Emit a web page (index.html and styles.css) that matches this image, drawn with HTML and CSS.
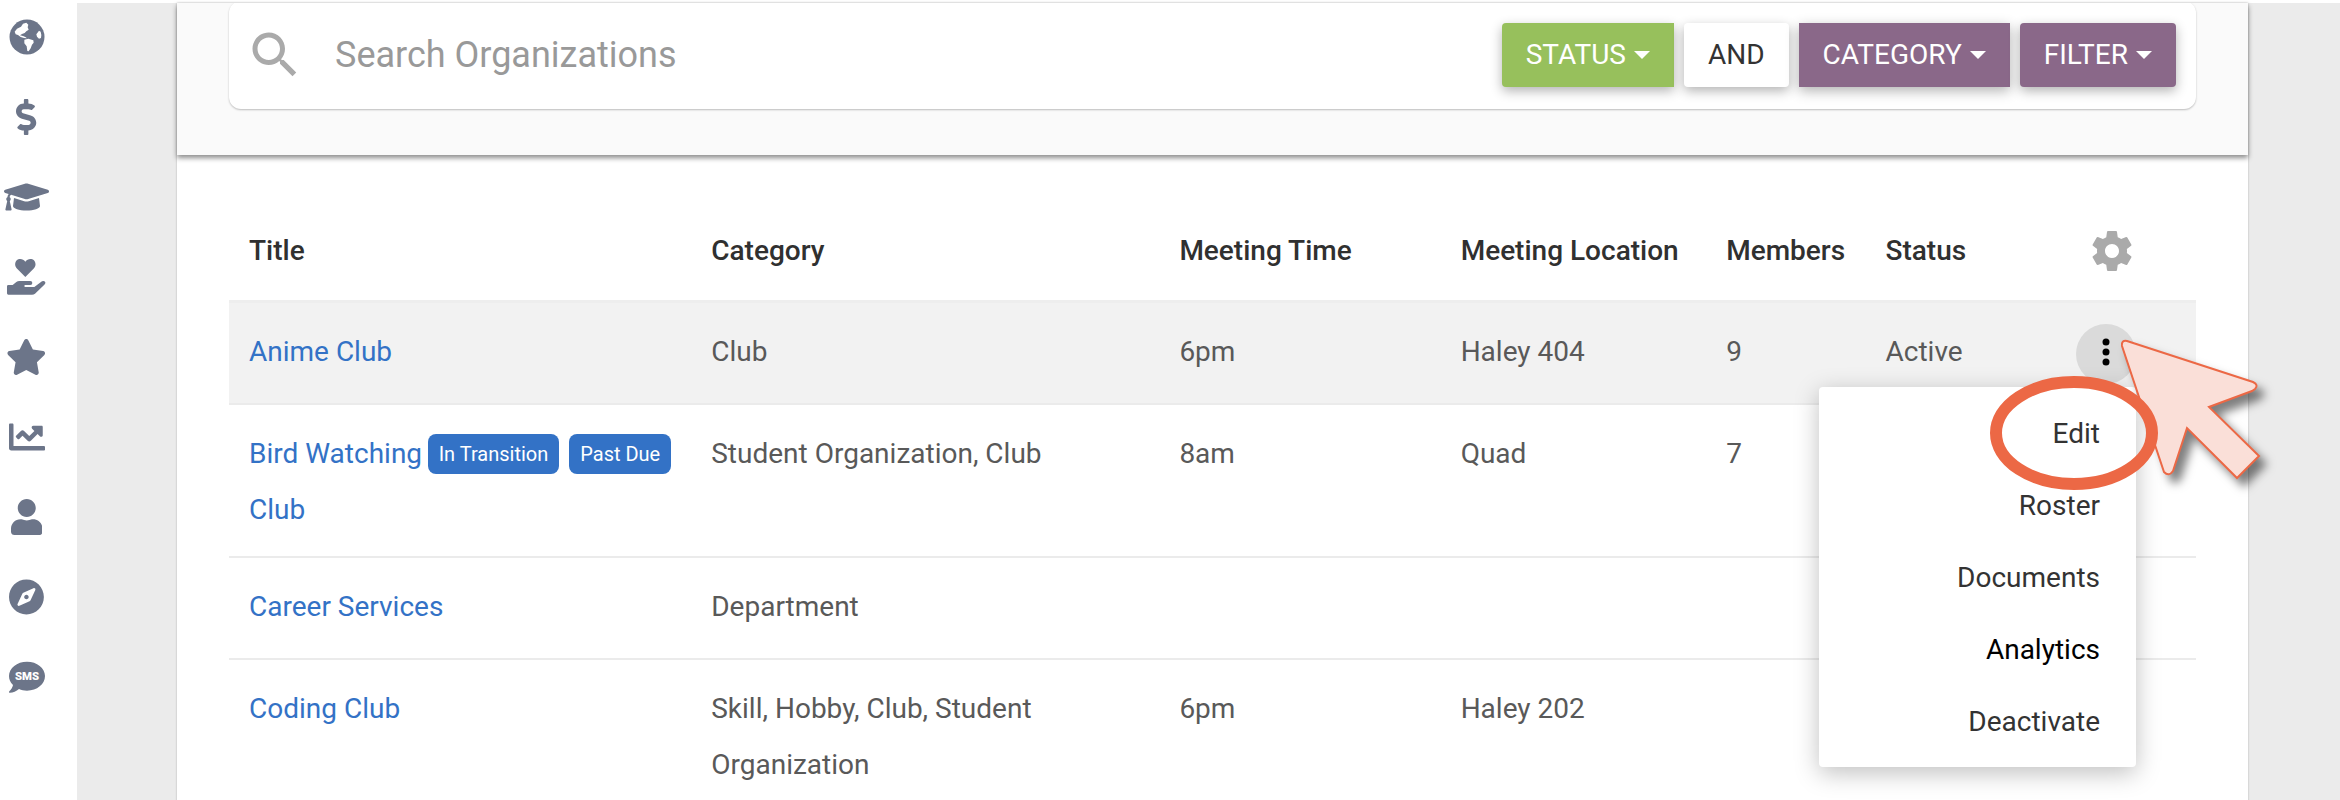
FILE: index.html
```html
<!DOCTYPE html>
<html lang="en">
<head>
    <meta charset="UTF-8">
    <meta name="viewport" content="width=device-width, initial-scale=1.0">
    <title>Organizations</title>
    <link rel="stylesheet" href="styles.css">
</head>
<body>
    <nav class="sidebar">
        <a href="#" aria-label="Campus">
            <svg viewBox="0 0 108 108"><circle cx="54" cy="54" r="52.500"/><path class="land" d="M17 38L24 29 36 23 42 14 52 11 58 17 56 25 59 32 52 37 47 42 39 45 33 49 42 51 49 54 54 58 45 57 35 54 27 48 20 46ZM46 62L58 59 73 64 74 71 69 77 65 88 59 97 55 96 53 82 46 73ZM90 35L95 38 97 48 96 57 90 59 84 53 82 46Z"/></svg>
        </a>
        <a href="#" aria-label="Finance">
            <svg viewBox="0 0 288 512"><path d="M209.2 233.4l-108-31.6C88.700 198.200 80 186.500 80 173.500c0-16.300 13.200-29.500 29.500-29.500h66.300c12.200 0 24.200 3.700 34.200 10.500 6.100 4.100 14.300 3.100 19.500-2l34.800-34c7.100-6.900 6.100-18.400-1.800-24.500C238 74.800 207.400 64.100 176 64V16c0-8.800-7.200-16-16-16h-32c-8.800 0-16 7.200-16 16v48h-2.500C45.800 64-5.400 118.700.5 183.600c4.200 46.100 39.400 83.600 83.800 96.600l102.500 30c12.500 3.700 21.200 15.300 21.200 28.300 0 16.300-13.200 29.500-29.500 29.500h-66.300C100 368 88 364.300 78 357.500c-6.100-4.100-14.300-3.100-19.500 2l-34.800 34c-7.100 6.900-6.100 18.400 1.800 24.500 24.500 19.200 55.100 29.900 86.500 30v48c0 8.800 7.200 16 16 16h32c8.800 0 16-7.200 16-16v-48.200c46.600-.9 90.300-28.600 105.700-72.700 21.500-61.600-14.600-124.800-72.500-141.700z"/></svg>
        </a>
        <a href="#" aria-label="Academics">
            <svg viewBox="0 0 640 512"><path d="M622.340 153.200L343.400 67.500c-15.200-4.670-31.600-4.670-46.790 0L17.660 153.200c-23.540 7.230-23.540 38.360 0 45.590l48.630 14.940c-10.670 13.190-17.230 29.280-17.880 46.900C38.780 266.150 32 276.110 32 288c0 10.780 5.680 19.850 13.860 25.650L20.330 428.530C18.110 438.520 25.710 448 35.940 448h56.110c10.240 0 17.840-9.480 15.620-19.470L82.140 313.650C90.320 307.850 96 298.780 96 288c0-11.570-6.470-21.250-15.660-26.870.76-15.020 8.440-28.300 20.690-36.720L296.600 284.500c9.060 2.780 26.440 6.250 46.790 0l278.950-85.700c23.550-7.240 23.550-38.360 0-45.600zM352.790 315.090c-28.530 8.760-52.840 3.920-65.590 0l-145.020-44.550L128 384c0 35.350 85.960 64 192 64s192-28.650 192-64l-14.180-113.470-145.030 44.560z"/></svg>
        </a>
        <a href="#" aria-label="Service">
            <svg viewBox="-8 0 124 108"><path d="M55 54L29 28C21 19 24 5 34 1c8-2 16 0 21 7 5-7 13-9 21-7 10 4 13 18 5 27ZM0 82q0-4 4-4h13l11-9q4-3 9-3h33q6 0 6 6t-6 6H55q-3 0-3 3t3 3h27l23-17q6-3 9 1t-2 9L84 104q-4 3-9 3H4q-4 0-4-4Z" transform="translate(-5 0)"/></svg>
        </a>
        <a href="#" aria-label="Favorites">
            <svg viewBox="0 0 576 512"><path d="M259.300 17.800L194 150.200 47.900 171.500c-26.200 3.800-36.700 36.100-17.700 54.600l105.700 103-25 145.500c-4.500 26.300 23.200 46 46.400 33.700L288 439.600l130.700 68.700c23.200 12.200 50.900-7.400 46.400-33.700l-25-145.500 105.700-103c19-18.500 8.500-50.800-17.700-54.600L382 150.200 316.700 17.800c-11.700-23.600-45.600-23.900-57.400 0z"/></svg>
        </a>
        <a href="#" aria-label="Reports">
            <svg viewBox="0 0 512 512"><path d="M496 384H64V80c0-8.840-7.160-16-16-16H16C7.160 64 0 71.160 0 80v336c0 17.670 14.330 32 32 32h464c8.840 0 16-7.160 16-16v-32c0-8.840-7.160-16-16-16zM464 96H345.940c-21.380 0-32.090 25.850-16.970 40.970l32.400 32.400L288 242.750l-73.370-73.370c-12.500-12.500-32.760-12.500-45.250 0l-68.690 68.690c-6.250 6.250-6.250 16.380 0 22.630l22.620 22.620c6.250 6.250 16.380 6.250 22.630 0L192 237.250l73.370 73.370c12.500 12.500 32.760 12.500 45.250 0l96-96 32.400 32.400c15.120 15.120 40.970 4.410 40.970-16.970V112c.01-8.840-7.150-16-15.990-16z"/></svg>
        </a>
        <a href="#" aria-label="Users">
            <svg viewBox="0 0 448 512"><path d="M224 256c70.700 0 128-57.300 128-128S294.700 0 224 0 96 57.300 96 128s57.300 128 128 128zm89.600 32h-16.700c-22.200 10.200-46.900 16-72.900 16s-50.600-5.800-72.900-16h-16.700C60.200 288 0 348.200 0 422.400V464c0 26.500 21.500 48 48 48h352c26.500 0 48-21.500 48-48v-41.600c0-74.200-60.200-134.400-134.400-134.400z"/></svg>
        </a>
        <a href="#" aria-label="Explore">
            <svg viewBox="0 0 496 512"><path d="M225.380 233.370c-12.500 12.500-12.500 32.760 0 45.250 12.490 12.500 32.760 12.500 45.250 0 12.500-12.500 12.500-32.760 0-45.250-12.500-12.490-32.760-12.490-45.250 0zM248 8C111.030 8 0 119.030 0 256s111.030 248 248 248 248-111.030 248-248S384.970 8 248 8zm126.140 148.050L308.170 300.400a31.938 31.938 0 0 1-15.770 15.770l-144.340 65.970c-16.650 7.610-33.810-9.550-26.200-26.200l65.980-144.350a31.938 31.938 0 0 1 15.770-15.770l144.340-65.970c16.650-7.600 33.800 9.550 26.190 26.200z"/></svg>
        </a>
        <a href="#" aria-label="Text messages">
            <svg viewBox="0 0 108 108"><path d="M54 8c30 0 54 19 54 43S84 95 54 95c-9 0-17-2-24-5-8 7-18 11-27 11-3 0-4-2-2-4 6-6 10-13 11-19C4 71 0 61 0 51 0 27 24 8 54 8Z"/><text x="54" y="63" text-anchor="middle">SMS</text></svg>
        </a>
    </nav>

    <main class="main">
        <div class="card">
            <header class="toolbar">
                <form class="search-box">
                    <label for="search" aria-label="Search Organizations">
                        <svg class="search-icon" viewBox="0 0 24 24"><path d="M15.500 14h-.79l-.28-.27C15.410 12.590 16 11.110 16 9.500 16 5.910 13.090 3 9.500 3S3 5.910 3 9.500 5.910 16 9.500 16c1.610 0 3.090-.59 4.230-1.570l.27.28v.79l5 4.990L20.490 19l-4.990-5zm-6 0C7.010 14 5 11.990 5 9.500S7.010 5 9.500 5 14 7.010 14 9.500 11.990 14 9.500 14z"/></svg>
                    </label>
                    <input type="text" id="search" placeholder="Search Organizations">
                    <div class="filters">
                        <button type="button" class="btn btn-status">STATUS<span class="caret"></span></button>
                        <button type="button" class="btn btn-and">AND</button>
                        <button type="button" class="btn btn-category">CATEGORY<span class="caret"></span></button>
                        <button type="button" class="btn btn-filter">FILTER<span class="caret"></span></button>
                    </div>
                </form>
            </header>

            <div class="content">
                <table class="organizations">
                    <colgroup>
                        <col class="col-title">
                        <col class="col-category">
                        <col class="col-time">
                        <col class="col-location">
                        <col class="col-members">
                        <col class="col-status">
                        <col>
                    </colgroup>
                    <thead>
                        <tr>
                            <th>Title</th>
                            <th>Category</th>
                            <th>Meeting Time</th>
                            <th>Meeting Location</th>
                            <th>Members</th>
                            <th>Status</th>
                            <th class="actions">
                                <button class="settings" aria-label="Table settings">
                                    <svg viewBox="0 0 24 24"><path d="M19.430 12.980c.04-.32.07-.64.07-.98s-.03-.66-.07-.98l2.110-1.650c.19-.15.24-.42.12-.64l-2-3.460c-.12-.22-.39-.3-.61-.22l-2.490 1c-.52-.4-1.080-.73-1.690-.98l-.38-2.650C14.460 2.180 14.250 2 14 2h-4c-.25 0-.46.18-.49.42l-.38 2.650c-.61.25-1.170.59-1.690.98l-2.490-1c-.23-.09-.49 0-.61.22l-2 3.460c-.13.22-.07.49.12.64l2.110 1.650c-.04.32-.07.65-.07.98s.03.66.07.98l-2.110 1.650c-.19.15-.24.42-.12.64l2 3.460c.12.22.39.3.61.22l2.490-1c.52.4 1.080.73 1.690.98l.38 2.650c.03.24.24.42.49.42h4c.25 0 .46-.18.49-.42l.38-2.650c.61-.25 1.170-.59 1.690-.98l2.490 1c.23.09.49 0 .61-.22l2-3.460c.12-.22.07-.49-.12-.64l-2.110-1.650zM12 15.500c-1.930 0-3.500-1.570-3.500-3.500s1.570-3.500 3.500-3.500 3.500 1.570 3.500 3.500-1.570 3.500-3.500 3.500z"/></svg>
                                </button>
                            </th>
                        </tr>
                    </thead>
                    <tbody>
                        <tr class="selected">
                            <td><a href="#">Anime Club</a></td>
                            <td>Club</td>
                            <td>6pm</td>
                            <td>Haley 404</td>
                            <td>9</td>
                            <td>Active</td>
                            <td class="actions">
                                <div class="row-menu">
                                    <button class="more" aria-label="Actions for Anime Club">
                                        <svg viewBox="0 0 60 60"><circle cx="30" cy="18" r="3.500"/><circle cx="30" cy="28" r="3.500"/><circle cx="30" cy="38" r="3.500"/></svg>
                                    </button>
                                    <div class="menu">
                                        <a href="#">Edit</a>
                                        <a href="#">Roster</a>
                                        <a href="#">Documents</a>
                                        <a href="#" class="current">Analytics</a>
                                        <a href="#">Deactivate</a>
                                    </div>
                                    <!-- arrow and ring that point at Edit -->
                                    <svg class="callout" viewBox="0 0 310 180">
                                        <path class="arrow" d="M147 17L273 58Q279 61 275 65L272 67 229 83 279 132 257 154 207 104 193 147Q189 153 184 148L142 22Q141 16 147 17Z"/>
                                        <ellipse cx="94" cy="109" rx="78" ry="51"/>
                                    </svg>
                                </div>
                            </td>
                        </tr>
                        <tr>
                            <td>
                                <div class="title">
                                    <a href="#">Bird Watching Club</a>
                                    <span class="badge">In Transition</span>
                                    <span class="badge">Past Due</span>
                                </div>
                            </td>
                            <td>Student Organization, Club</td>
                            <td>8am</td>
                            <td>Quad</td>
                            <td>7</td>
                            <td></td>
                            <td></td>
                        </tr>
                        <tr>
                            <td><a href="#">Career Services</a></td>
                            <td>Department</td>
                            <td></td>
                            <td></td>
                            <td></td>
                            <td></td>
                            <td></td>
                        </tr>
                        <tr>
                            <td><a href="#">Coding Club</a></td>
                            <td>Skill, Hobby, Club, Student Organization</td>
                            <td>6pm</td>
                            <td>Haley 202</td>
                            <td></td>
                            <td></td>
                            <td></td>
                        </tr>
                    </tbody>
                </table>
            </div>
        </div>
    </main>
</body>
</html>
```

FILE: styles.css
```css
* {
    margin: 0;
    padding: 0;
    box-sizing: border-box;
}
body {
    display: flex;
    height: 100vh;
    overflow: hidden;
    background: #fff;
    color: #595959;
    font-family: Roboto, "Liberation Sans", sans-serif;
    font-size: 28px;
    line-height: 56px;
}
a {
    color: #3372c6;
    text-decoration: none;
}
button {
    border: none;
    background: none;
    font: inherit;
    cursor: pointer;
}
svg {
    display: block;
}

/* Sidebar */
.sidebar {
    flex: none;
    width: 77px;
    padding: 19px 24px 0 0;
    display: flex;
    flex-direction: column;
    gap: 44px;
}
.sidebar a {
    display: flex;
    justify-content: center;
}
.sidebar svg {
    height: 36px;
    fill: #6c7589;
}
.sidebar .land {
    fill: #fff;
}
.sidebar text {
    fill: #fff;
    font-size: 34px;
    font-weight: 900;
}

/* Main card */
.main {
    flex: 1;
    min-width: 0;
    padding: 0 92px 0 100px;
    border-top: 3px solid #fff;
    background: #ebebeb;
}
.card {
    min-height: 100%;
    background: #fff;
    box-shadow: 0 0 2px rgba(0,0,0,0.25);
}
.toolbar {
    display: flex;
    align-items: flex-end;
    height: 152px;
    padding: 0 52px 46px;
    overflow: hidden;
    background: #fafafa;
    box-shadow: 0 3px 5px rgba(0,0,0,0.45);
}
.search-box {
    flex: 1;
    display: flex;
    align-items: center;
    height: 108px;
    padding: 0 20px 0 16px;
    border-radius: 12px;
    background: #fff;
    box-shadow: 0 1px 2px rgba(0,0,0,0.25);
}
.search-icon {
    width: 60px;
    height: 60px;
    fill: #aaa;
}
.search-box input {
    flex: 1;
    min-width: 0;
    margin-left: 30px;
    border: none;
    outline: none;
    background: none;
    font: inherit;
    font-size: 36px;
    color: #333;
}
.search-box input::placeholder {
    color: #999;
    opacity: 1;
}
.filters {
    display: flex;
    gap: 10px;
}
.btn {
    display: flex;
    align-items: center;
    gap: 8px;
    height: 64px;
    padding: 0 24px;
    border-radius: 4px;
    background: #8a6889;
    color: #fff;
    box-shadow: 0 4px 12px rgba(0,0,0,0.3);
}
.btn-status {
    border-radius: 4px 0 0 4px;
    background: #97c05c;
}
.btn-and {
    background: #fff;
    color: #333;
}
.btn-category {
    border-radius: 0;
}
.caret {
    border: 8px solid transparent;
    border-top-color: #fff;
    border-bottom: none;
}

/* Table */
.content {
    padding: 47px 52px 0;
}
.organizations {
    width: 100%;
    table-layout: fixed;
    border-spacing: 0;
}
.col-title {
    width: 23.5%;
}
.col-category {
    width: 23.8%;
}
.col-time {
    width: 14.3%;
}
.col-location {
    width: 13.5%;
}
.col-members {
    width: 8.1%;
}
.col-status {
    width: 8.6%;
}
.organizations th {
    padding: 21px 20px;
    border-bottom: 3px solid #eee;
    color: #303030;
    font-weight: 500;
    text-align: left;
    white-space: nowrap;
}
.organizations td {
    height: 102px;
    padding: 21px 20px 18px;
    border-bottom: 2px solid #ebebeb;
    vertical-align: top;
}
.organizations .selected td {
    background: #f2f2f2;
}
.organizations .actions {
    padding-right: 60px;
}
.settings {
    display: block;
    width: 48px;
    margin-left: auto;
    fill: #aaa;
}
.title {
    display: flex;
    align-items: flex-start;
    gap: 10px;
}
.title a {
    flex: 1;
    margin-right: -10px;
}
.badge {
    flex: none;
    margin-top: 8px;
    padding: 0 11px;
    border-radius: 8px;
    background: #3372c6;
    color: #fff;
    font-size: 20px;
    line-height: 40px;
}

/* Row menu */
.row-menu {
    position: relative;
    width: 60px;
    margin-left: auto;
}
.more {
    display: block;
    width: 60px;
    height: 60px;
    border-radius: 50%;
    background: #dadada;
}
.menu {
    position: absolute;
    top: 63px;
    right: 0;
    z-index: 1;
    width: 317px;
    padding: 11px 0 9px;
    border-radius: 4px;
    background: #fff;
    box-shadow: 0 6px 24px rgba(0,0,0,0.25);
}
.menu a {
    display: block;
    padding: 0 36px;
    color: #333;
    line-height: 72px;
    text-align: right;
}
.menu .current {
    color: #000;
}
.callout {
    position: absolute;
    top: 0;
    left: -96px;
    z-index: 2;
    width: 310px;
    height: 180px;
    overflow: visible;
    pointer-events: none;
}
.callout .arrow {
    fill: #fadfd8;
    stroke: #ec6845;
    stroke-width: 2;
    filter: drop-shadow(7px 8px 5px rgba(0,0,0,0.5));
}
.callout ellipse {
    fill: none;
    stroke: #ec6845;
    stroke-width: 12;
}
```
